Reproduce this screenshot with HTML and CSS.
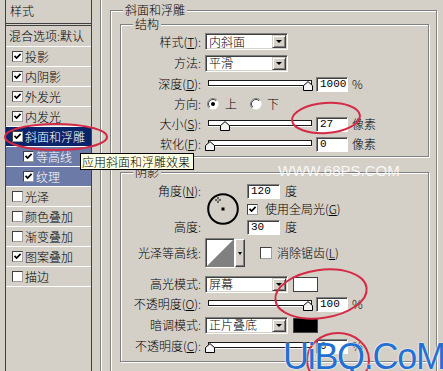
FILE: index.html
```html
<!DOCTYPE html>
<html lang="zh-CN">
<head>
<meta charset="utf-8">
<title>图层样式</title>
<link rel="stylesheet" href="styles.css">
</head>
<body>
<div class="dialog">
  <div class="stylelist">
    <div class="list-head">样式</div>
    <div class="list-blend">混合选项:默认</div>
    <div class="item"><span class="cb"><svg viewBox="0 0 9 9"><path d="M1.5 3.8 3.6 6 7.6 1.8"/></svg></span>投影</div>
    <div class="item"><span class="cb"><svg viewBox="0 0 9 9"><path d="M1.5 3.8 3.6 6 7.6 1.8"/></svg></span>内阴影</div>
    <div class="item"><span class="cb"><svg viewBox="0 0 9 9"><path d="M1.5 3.8 3.6 6 7.6 1.8"/></svg></span>外发光</div>
    <div class="item"><span class="cb"><svg viewBox="0 0 9 9"><path d="M1.5 3.8 3.6 6 7.6 1.8"/></svg></span>内发光</div>
    <div class="item sel"><span class="cb"><svg viewBox="0 0 9 9"><path d="M1.5 3.8 3.6 6 7.6 1.8"/></svg></span>斜面和浮雕</div>
    <div class="item sub"><span class="cb"><svg viewBox="0 0 9 9"><path d="M1.5 3.8 3.6 6 7.6 1.8"/></svg></span>等高线</div>
    <div class="item sub"><span class="cb"><svg viewBox="0 0 9 9"><path d="M1.5 3.8 3.6 6 7.6 1.8"/></svg></span>纹理</div>
    <div class="item"><span class="cb"></span>光泽</div>
    <div class="item"><span class="cb"></span>颜色叠加</div>
    <div class="item"><span class="cb"></span>渐变叠加</div>
    <div class="item"><span class="cb"><svg viewBox="0 0 9 9"><path d="M1.5 3.8 3.6 6 7.6 1.8"/></svg></span>图案叠加</div>
    <div class="item"><span class="cb"></span>描边</div>
  </div>

  <div class="panel">
    <fieldset class="group main">
      <legend>斜面和浮雕</legend>
      <div class="main-body">
        <fieldset class="group sect struct">
          <legend>结构</legend>
          <div class="row r-style">
            <span class="lbl">样式(<u>T</u>):</span>
            <span class="select"><span class="val">内斜面</span><span class="btn"></span></span>
          </div>
          <div class="row r-method">
            <span class="lbl">方法:</span>
            <span class="select"><span class="val">平滑</span><span class="btn"></span></span>
          </div>
          <div class="row">
            <span class="lbl">深度(<u>D</u>):</span>
            <span class="slider"><span class="track"></span><span class="thumb" style="left:95px"><svg viewBox="0 0 10 10"><path d="M0.5 9.5V4.6L5 0.6 9.5 4.6V9.5Z"/></svg></span></span>
            <span class="num">1000</span><span class="unit">%</span>
          </div>
          <div class="row">
            <span class="lbl">方向:</span>
            <svg class="radio" viewBox="0 0 12 12"><circle cx="6" cy="6" r="5.5" fill="#fff"/><path class="r-out" d="M2.1 9.9A5.5 5.5 0 0 1 9.9 2.1"/><path class="r-in" d="M2.8 9.2A4.5 4.5 0 0 1 9.2 2.8"/><circle cx="6" cy="6" r="2" fill="#000"/></svg>
            <span class="opt">上</span>
            <svg class="radio radio2" viewBox="0 0 12 12"><circle cx="6" cy="6" r="5.5" fill="#fff"/><path class="r-out" d="M2.1 9.9A5.5 5.5 0 0 1 9.9 2.1"/><path class="r-in" d="M2.8 9.2A4.5 4.5 0 0 1 9.2 2.8"/></svg>
            <span class="opt opt2">下</span>
          </div>
          <div class="row">
            <span class="lbl">大小(<u>S</u>):</span>
            <span class="slider"><span class="track"></span><span class="thumb" style="left:12px"><svg viewBox="0 0 10 10"><path d="M0.5 9.5V4.6L5 0.6 9.5 4.6V9.5Z"/></svg></span></span>
            <span class="num">27</span><span class="unit">像素</span>
          </div>
          <div class="row">
            <span class="lbl">软化(<u>F</u>):</span>
            <span class="slider"><span class="track"></span><span class="thumb" style="left:-3px"><svg viewBox="0 0 10 10"><path d="M0.5 9.5V4.6L5 0.6 9.5 4.6V9.5Z"/></svg></span></span>
            <span class="num">0</span><span class="unit">像素</span>
          </div>
        </fieldset>

        <fieldset class="group sect shade">
          <legend>阴影</legend>
          <div class="angle">
            <span class="lbl a-l1">角度(<u>N</u>):</span>
            <svg class="dial" viewBox="0 0 32 32"><circle cx="16" cy="16" r="14.8" fill="none" stroke="#000" stroke-width="2"/><rect x="14.5" y="14.5" width="3" height="3" fill="#000"/><path d="M8 7h2.2M11.8 7H14M11 4v2.2M11 7.8V10" stroke="#000" stroke-width="1" fill="none"/></svg>
            <span class="a-f a-f1"><span class="num n-angle">120</span><span class="unit u-deg">度</span></span>
            <span class="a-f a-f2"><span class="cb cb-global"><svg viewBox="0 0 9 9"><path d="M1.5 3.8 3.6 6 7.6 1.8"/></svg></span>使用全局光(<u>G</u>)</span>
            <span class="lbl a-l3">高度:</span>
            <span class="a-f a-f3"><span class="num n-angle">30</span><span class="unit u-deg">度</span></span>
          </div>
          <div class="row r-contour">
            <span class="lbl">光泽等高线:</span>
            <span class="contour">
              <span class="contour-box"><svg viewBox="0 0 28 28"><path d="M0 28 28 0V28Z" fill="#808080"/></svg></span>
              <span class="cbtn"></span>
            </span>
            <span class="cb cb-aa"></span>
            <span>消除锯齿(<u>L</u>)</span>
          </div>
          <div class="row">
            <span class="lbl">高光模式:</span>
            <span class="select"><span class="val">屏幕</span><span class="btn"></span></span>
            <span class="swatch"></span>
          </div>
          <div class="row">
            <span class="lbl">不透明度(<u>O</u>):</span>
            <span class="slider"><span class="track"></span><span class="thumb" style="left:95px"><svg viewBox="0 0 10 10"><path d="M0.5 9.5V4.6L5 0.6 9.5 4.6V9.5Z"/></svg></span></span>
            <span class="num">100</span><span class="unit">%</span>
          </div>
          <div class="row r-shadowmode">
            <span class="lbl">暗调模式:</span>
            <span class="select"><span class="val">正片叠底</span><span class="btn"></span></span>
            <span class="swatch swatch-black"></span>
          </div>
          <div class="row">
            <span class="lbl">不透明度(<u>C</u>):</span>
            <span class="slider"><span class="track"></span><span class="thumb" style="left:-3px"><svg viewBox="0 0 10 10"><path d="M0.5 9.5V4.6L5 0.6 9.5 4.6V9.5Z"/></svg></span></span>
            <span class="num">0</span><span class="unit">%</span>
          </div>
        </fieldset>
      </div>
    </fieldset>
  </div>
</div>

<div class="tooltip">应用斜面和浮雕效果</div>
<div class="wm-site">WWW.68PS.COM</div>
<svg class="marks" viewBox="0 0 443 371">
  <ellipse cx="56" cy="137" rx="51" ry="13"/>
  <ellipse cx="326" cy="118" rx="34" ry="15" transform="rotate(-4 326 118)"/>
  <ellipse cx="321" cy="294" rx="46" ry="24" transform="rotate(-8 321 294)"/>
  <ellipse cx="338" cy="360" rx="31" ry="27"/>
</svg>
<div class="wm-uibq">UiBQ.CoM</div>
</body>
</html>
```

FILE: styles.css
```css
* { box-sizing: border-box; }
html, body { margin: 0; padding: 0; }
body {
  position: relative;
  width: 443px;
  height: 371px;
  overflow: hidden;
  background: #d4d0c8;
  color: #000;
  font-family: "Noto Sans CJK SC", "Noto Sans", sans-serif;
  font-size: 12px;
  font-weight: 300;
  line-height: 14px;
}
u { text-decoration: underline; }

.dialog { display: flex; height: 371px; }

/* left style list */
.stylelist {
  flex: none;
  width: 87px;
  height: 371px;
  margin-left: 5px;
  border-left: 1px solid #404040;
  border-right: 1px solid #404040;
}
.list-head {
  height: 26px;
  padding: 4px 0 0 4px;
  border-bottom: 3px double #404040;
}
.list-blend {
  height: 21px;
  padding-left: 3px;
  line-height: 20px;
  border-bottom: 1px solid #fff;
  white-space: nowrap;
  overflow: hidden;
}
.item {
  display: flex;
  align-items: center;
  height: 20px;
  padding-left: 6px;
  border-bottom: 1px solid #fff;
  white-space: nowrap;
}
.item.sel { background: #0a246a; color: #fff; }
.item.sub { padding-left: 17px; background: #6b7aa6; color: #fff; }

.cb {
  flex: none;
  display: inline-flex;
  align-items: center;
  justify-content: center;
  width: 11px;
  height: 11px;
  margin-right: 2px;
  background: #fff;
  border: 1px solid;
  border-color: #404040 #a0a0a0 #a0a0a0 #404040;
}
.cb svg { display: block; width: 9px; height: 9px; fill: none; stroke: #000; stroke-width: 1.7; }
.cb-global { margin-right: 7px; }
.cb-aa { width: 12px; height: 12px; margin-left: 15px; margin-right: 5px; }

/* right panel */
.panel {
  flex: 1;
  margin-left: 8px;
  padding: 3px 0 0 9px;
  border-left: 1px solid #808080;
  box-shadow: inset 1px 0 0 #fff;
}
.group {
  margin: 0;
  padding: 0;
  min-width: 0;
  border: 1px solid #808080;
  box-shadow: inset 1px 1px 0 #fff, 1px 1px 0 #fff;
}
.group > legend {
  margin-left: 12px;
  padding: 0 2px;
  line-height: 14px;
  background: #d4d0c8;
}
.main { width: 327px; height: 380px; }
.main-body { padding-left: 9px; }
.sect { width: 309px; }
.struct { padding-bottom: 2px; }
.shade { margin-top: 8px; padding-bottom: 5px; }

.row { display: flex; align-items: center; height: 20px; white-space: nowrap; }
.r-style { height: 21px; }
.r-method { height: 22px; }
.r-shadowmode { height: 22px; }
.lbl { flex: none; width: 80px; margin-right: 4px; text-align: right; white-space: nowrap; }

.select {
  flex: none;
  display: flex;
  align-items: center;
  width: 83px;
  height: 17px;
  padding: 0 1px 0 3px;
  background: #fff;
  border: 1px solid;
  border-color: #808080 #fff #fff #808080;
  box-shadow: inset 1px 1px 0 #404040, inset -1px -1px 0 #d4d0c8;
}
.select .val { flex: 1; line-height: 14px; }
.btn {
  flex: none;
  display: flex;
  align-items: center;
  justify-content: center;
  width: 14px;
  height: 13px;
  background: #d4d0c8;
  border: 1px solid;
  border-color: #d4d0c8 #404040 #404040 #d4d0c8;
  box-shadow: inset 1px 1px 0 #fff, inset -1px -1px 0 #808080;
}
.btn::after {
  content: "";
  border-left: 3px solid transparent;
  border-right: 3px solid transparent;
  border-top: 3px solid #000;
}

.slider { position: relative; flex: none; width: 104px; height: 20px; margin: 0 4px 0 3px; }
.track {
  position: absolute;
  left: 0;
  right: 0;
  top: 6px;
  height: 6px;
  background: #fff;
  border: 1px solid #1a1a1a;
  box-shadow: 0 1px 0 #fff;
}
.thumb { position: absolute; top: 7px; width: 10px; height: 10px; }
.thumb svg { display: block; width: 10px; height: 10px; fill: #f4f4f4; stroke: #000; stroke-width: 1; }

.num {
  flex: none;
  width: 32px;
  height: 15px;
  padding-left: 3px;
  background: #fff;
  border: 1px solid;
  border-color: #808080 #fff #fff #808080;
  box-shadow: inset 1px 1px 0 #404040;
  font: 11px/13px "Liberation Mono", monospace;
}
.unit { margin-left: 4px; }

.radio { flex: none; width: 12px; height: 12px; margin-left: 2px; }
.radio2 { margin-left: 13px; }
.radio .r-out { fill: none; stroke: #808080; stroke-width: 1; }
.radio .r-in { fill: none; stroke: #404040; stroke-width: 1; }
.opt { margin-left: 6px; }
.opt2 { margin-left: 5px; }

/* angle / altitude block */
.angle {
  display: grid;
  grid-template-columns: 80px 46px auto;
  grid-template-rows: 18px 18px 18px;
  align-items: center;
  margin-top: 3px;
  white-space: nowrap;
}
.angle .lbl { width: auto; margin-right: 0; }
.a-l1 { grid-column: 1; grid-row: 1; }
.a-l3 { grid-column: 1; grid-row: 3; }
.dial { grid-column: 2; grid-row: 1 / 4; width: 32px; height: 32px; margin-left: 6px; }
.a-f { grid-column: 3; display: flex; align-items: center; }
.a-f1 { grid-row: 1; }
.a-f2 { grid-row: 2; }
.a-f3 { grid-row: 3; }
.n-angle { width: 33px; }
.u-deg { margin-left: 5px; }

.r-contour { height: 34px; margin-bottom: 4px; }
.contour { flex: none; display: flex; align-items: center; height: 30px; }
.contour-box {
  width: 30px;
  height: 30px;
  background: #fff;
  border: 1px solid;
  border-color: #808080 #fff #fff #808080;
  box-shadow: inset 1px 1px 0 #404040;
  overflow: hidden;
}
.contour-box svg { display: block; width: 28px; height: 28px; }
.cbtn {
  display: flex;
  align-items: center;
  justify-content: center;
  width: 10px;
  height: 28px;
  background: #d4d0c8;
  border: 1px solid;
  border-color: #fff #404040 #404040 #fff;
  box-shadow: inset -1px -1px 0 #808080;
}
.cbtn::after {
  content: "";
  border-left: 2px solid transparent;
  border-right: 2px solid transparent;
  border-top: 3px solid #000;
}

.swatch {
  flex: none;
  width: 25px;
  height: 15px;
  margin-left: 5px;
  background: #fff;
  border: 1px solid #404040;
}
.swatch-black { background: #000; }

/* overlays */
.tooltip {
  position: absolute;
  left: 80px;
  top: 153px;
  height: 17px;
  padding: 0 3px 0 1px;
  line-height: 15px;
  background: #ffffe1;
  border: 1px solid #000;
  white-space: nowrap;
}
.wm-site {
  position: absolute;
  left: 278px;
  top: 162px;
  font: 15px/18px "Liberation Sans", Arial, sans-serif;
  color: rgba(255, 255, 255, 0.85);
  white-space: nowrap;
}
.marks {
  position: absolute;
  left: 0;
  top: 0;
  width: 443px;
  height: 371px;
  pointer-events: none;
  fill: none;
  stroke: #d42a46;
  stroke-width: 2;
}
.wm-uibq {
  position: absolute;
  left: 283px;
  top: 339px;
  font: 36px/36px "Liberation Sans", Arial, sans-serif;
  letter-spacing: -1.3px;
  color: #2470d2;
  text-shadow: 0 0 2px #fff, 0 0 1px #fff;
  white-space: nowrap;
}
```
